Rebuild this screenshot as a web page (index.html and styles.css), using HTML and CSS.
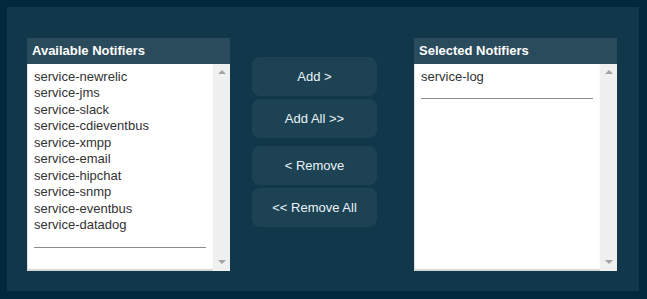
FILE: index.html
```html
<!DOCTYPE html>
<html lang="en">
<head>
    <meta charset="UTF-8">
    <title>Notifiers</title>
    <link rel="stylesheet" href="styles.css">
</head>
<body>
    <div class="panel">
        <div class="list-box">
            <div class="list-header">Available Notifiers</div>
            <div class="list-body">
                <div class="list-items">
                    <div class="item">service-newrelic</div>
                    <div class="item">service-jms</div>
                    <div class="item">service-slack</div>
                    <div class="item">service-cdieventbus</div>
                    <div class="item">service-xmpp</div>
                    <div class="item">service-email</div>
                    <div class="item">service-hipchat</div>
                    <div class="item">service-snmp</div>
                    <div class="item">service-eventbus</div>
                    <div class="item">service-datadog</div>
                    <div class="list-rule"></div>
                </div>
                <div class="scrollbar">
                    <span class="arrow-up"></span>
                    <span class="arrow-down"></span>
                </div>
            </div>
        </div>

        <div class="actions">
            <button class="btn">Add &gt;</button>
            <button class="btn">Add All &gt;&gt;</button>
            <button class="btn btn-gap">&lt; Remove</button>
            <button class="btn">&lt;&lt; Remove All</button>
        </div>

        <div class="list-box">
            <div class="list-header">Selected Notifiers</div>
            <div class="list-body">
                <div class="list-items">
                    <div class="item">service-log</div>
                    <div class="list-rule"></div>
                </div>
                <div class="scrollbar">
                    <span class="arrow-up"></span>
                    <span class="arrow-down"></span>
                </div>
            </div>
        </div>
    </div>
</body>
</html>
```

FILE: styles.css
```css
html, body {
    height: 100%;
}
body {
    margin: 0;
    padding: 7px 8px 8px 7px;
    box-sizing: border-box;
    background-color: #02293b;
    font-family: Arial, "Liberation Sans", sans-serif;
    font-size: 13px;
}
.panel {
    height: 284px;
    background-color: #10384a;
    display: flex;
    align-items: flex-start;
    padding: 31px 22px 0 20px;
    box-sizing: border-box;
}
.list-box {
    width: 203px;
    display: flex;
    flex-direction: column;
}
.list-header {
    height: 26px;
    line-height: 25px;
    background-color: #2a4b5c;
    color: #fff;
    font-weight: bold;
    padding-left: 5px;
}
.list-body {
    height: 207px;
    display: flex;
    background: #fff;
}
.list-items {
    flex: 1;
    padding: 5px 7px 0 7px;
    color: #333;
    box-shadow: inset 1px 0 0 #e2e2e2, inset 0 -2px 1px #d6d6d6;
}
.item {
    line-height: 16.45px;
    white-space: nowrap;
}
.list-rule {
    margin-top: 13px;
    border-top: 1px solid #8a8a8a;
}
.scrollbar {
    width: 17px;
    background-color: #f0f0f0;
    display: flex;
    flex-direction: column;
    justify-content: space-between;
    align-items: center;
    padding: 6px 0 7px 0;
    box-sizing: border-box;
}
.arrow-up {
    width: 0;
    height: 0;
    border-left: 4px solid transparent;
    border-right: 4px solid transparent;
    border-bottom: 4px solid #a3a3a3;
}
.arrow-down {
    width: 0;
    height: 0;
    border-left: 4px solid transparent;
    border-right: 4px solid transparent;
    border-top: 4px solid #a3a3a3;
}
.actions {
    width: 125px;
    margin: 19px 37px 0 22px;
    display: flex;
    flex-direction: column;
    gap: 3px;
}
.btn {
    height: 39px;
    border: none;
    border-radius: 8px;
    background-color: #1d4253;
    color: #eaf4f8;
    font-family: Arial, "Liberation Sans", sans-serif;
    font-size: 13px;
    padding: 0;
    cursor: pointer;
}
.btn-gap {
    margin-top: 5px;
}
```
